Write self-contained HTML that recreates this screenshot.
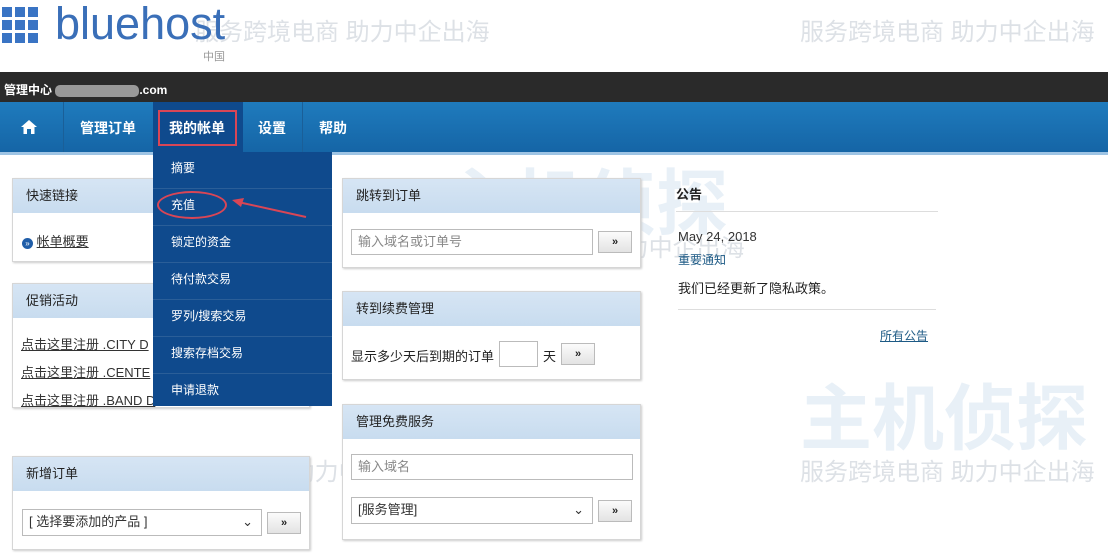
<!DOCTYPE html>
<html><head><meta charset="utf-8"><style>
*{margin:0;padding:0;box-sizing:border-box}
body{width:1108px;height:554px;overflow:hidden;background:#fff;position:relative;font-family:"Liberation Sans","Noto Sans CJK SC",sans-serif;font-size:13px;color:#222}
.a{position:absolute}
.wm{position:absolute;color:#dde1e6;font-size:24px;white-space:nowrap}
.nav{position:absolute;top:102px;left:0;width:1108px;height:50px;background:linear-gradient(#1f7bbd,#1565a6)}
.nav span{position:absolute;top:0;height:50px;line-height:52px;color:#fff;font-weight:bold;font-size:14px}
.panel{position:absolute;background:#fff;border:1px solid #d6d6d6;box-shadow:1px 1px 2px #ccc}
.ph{height:34px;line-height:34px;padding-left:13px;background:linear-gradient(#d6e5f4,#c8dcef);font-size:13px;color:#222}
.menu{position:absolute;left:153px;top:152px;width:179px;height:254px;background:#0f4a8d}
.menu div{height:37px;line-height:33px;padding-left:18px;color:#fff;font-size:12px;border-bottom:1px solid #2a5e98}
.in{position:absolute;border:1px solid #bbb;background:#fff;height:26px;line-height:24px;padding-left:6px;color:#888;font-size:13px}
.btn{position:absolute;border:1px solid #bbb;background:linear-gradient(#fbfbfb,#e3e3e3);width:34px;height:22px;text-align:center;line-height:20px;font-size:11px;font-weight:bold}
a{color:#333;text-decoration:underline}
</style></head><body>
<div class="wm" style="left:195px;top:12px">服务跨境电商 助力中企出海</div>
<div class="wm" style="left:800px;top:12px">服务跨境电商 助力中企出海</div>
<div class="wm" style="left:140px;top:452px">服务跨境电商 助力中企出海</div>
<div class="wm" style="left:800px;top:452px">服务跨境电商 助力中企出海</div>
<div class="wm" style="left:450px;top:228px">服务跨境电商 助力中企出海</div>
<div class="wm" style="left:800px;top:360px;font-size:72px;color:#e8f0f7;font-weight:bold">主机侦探</div>
<div class="wm" style="left:440px;top:145px;font-size:72px;color:#e8f0f7;font-weight:bold">主机侦探</div>
<!-- logo -->
<svg class="a" style="left:2px;top:7px" width="38" height="38"><g fill="#3a74c4">
<rect x="0" y="0" width="10" height="10"/><rect x="13" y="0" width="10" height="10"/><rect x="26" y="0" width="10" height="10"/>
<rect x="0" y="13" width="10" height="10"/><rect x="13" y="13" width="10" height="10"/><rect x="26" y="13" width="10" height="10"/>
<rect x="0" y="26" width="10" height="10"/><rect x="13" y="26" width="10" height="10"/><rect x="26" y="26" width="10" height="10"/></g></svg>
<div class="a" style="left:55px;top:-2px;font-size:45px;color:#3a6fb8">bluehost</div>
<div class="a" style="left:203px;top:48px;font-size:11px;color:#999">中国</div>
<div class="a" style="left:0;top:72px;width:1108px;height:30px;background:#2a2a2a"></div>
<div class="a" style="left:4px;top:81px;color:#fff;font-weight:bold;font-size:12px">管理中心 <span style="display:inline-block;width:84px;height:12px;background:#999;border-radius:5px;vertical-align:middle"></span>.com</div>
<div class="nav">
<svg class="a" style="left:21px;top:18px" width="16" height="14"><path d="M8 0 L16 7 L13.5 7 L13.5 14 L10 14 L10 9 L6 9 L6 14 L2.5 14 L2.5 7 L0 7 Z" fill="#fff"/></svg>
<div class="a" style="left:63px;top:0;width:1px;height:50px;background:#1a5f98"></div>
<span style="left:80px">管理订单</span>
<div class="a" style="left:153px;top:0;width:90px;height:50px;background:#0f4a8d"></div>
<div class="a" style="left:158px;top:8px;width:79px;height:36px;border:2px solid #d94656"></div>
<span style="left:169px">我的帐单</span>
<span style="left:258px">设置</span>
<div class="a" style="left:302px;top:0;width:1px;height:50px;background:#1a5f98"></div>
<span style="left:319px">帮助</span>
</div>
<div class="a" style="left:0;top:152px;width:1108px;height:3px;background:#9ec4e4"></div>

<div class="panel" style="left:12px;top:178px;width:298px;height:84px"><div class="ph">快速链接</div>
<div class="a" style="left:9px;top:52px"><span style="display:inline-block;width:11px;height:11px;border-radius:50%;background:#1f5da8;color:#fff;font-size:8px;line-height:11px;text-align:center">»</span> <a>帐单概要</a></div></div>
<div class="panel" style="left:12px;top:283px;width:298px;height:125px"><div class="ph">促销活动</div>
<div class="a" style="left:8px;top:47px;line-height:28px"><a>点击这里注册 .CITY D</a><br><a>点击这里注册 .CENTE</a><br><a>点击这里注册 .BAND D</a></div></div>
<div class="panel" style="left:12px;top:456px;width:298px;height:94px"><div class="ph">新增订单</div>
<div class="in" style="left:9px;top:52px;width:240px;height:27px;color:#333">[ 选择要添加的产品 ]<span style="position:absolute;right:8px">&#8964;</span></div>
<div class="btn" style="left:254px;top:55px">»</div></div>

<div class="panel" style="left:342px;top:178px;width:299px;height:90px"><div class="ph">跳转到订单</div>
<div class="in" style="left:8px;top:50px;width:242px">输入域名或订单号</div>
<div class="btn" style="left:255px;top:52px">»</div></div>
<div class="panel" style="left:342px;top:291px;width:299px;height:89px"><div class="ph">转到续费管理</div>
<div class="a" style="left:8px;top:54px">显示多少天后到期的订单</div>
<div class="in" style="left:156px;top:49px;width:39px"></div>
<div class="a" style="left:200px;top:54px">天</div>
<div class="btn" style="left:218px;top:51px">»</div></div>
<div class="panel" style="left:342px;top:404px;width:299px;height:136px"><div class="ph">管理免费服务</div>
<div class="in" style="left:8px;top:49px;width:282px">输入域名</div>
<div class="in" style="left:8px;top:92px;width:242px;height:27px;color:#333">[服务管理]<span style="position:absolute;right:8px">&#8964;</span></div>
<div class="btn" style="left:255px;top:95px">»</div></div>

<div class="a" style="left:676px;top:184px;font-weight:bold;font-size:13px">公告</div>
<div class="a" style="left:676px;top:211px;width:262px;height:1px;background:#ddd"></div>
<div class="a" style="left:678px;top:229px;font-size:13px;color:#333">May 24, 2018</div>
<div class="a" style="left:678px;top:251px;font-size:12px;color:#1d5a85">重要通知</div>
<div class="a" style="left:678px;top:278px;font-size:13px">我们已经更新了隐私政策。</div>
<div class="a" style="left:678px;top:309px;width:258px;height:1px;background:#ddd"></div>
<div class="a" style="left:880px;top:327px;font-size:12px"><a style="color:#1d5a85">所有公告</a></div>

<div class="menu">
<div>摘要</div><div>充值</div><div>锁定的资金</div><div>待付款交易</div><div>罗列/搜索交易</div><div>搜索存档交易</div><div style="border:none">申请退款</div>
</div>
<div class="a" style="left:157px;top:191px;width:70px;height:28px;border:2px solid #d94656;border-radius:50%"></div>
<svg class="a" style="left:228px;top:195px" width="80" height="25"><line x1="78" y1="22" x2="10" y2="7" stroke="#d94656" stroke-width="2"/><polygon points="4,5 16,3 13,12" fill="#d94656"/></svg>
</body></html>
